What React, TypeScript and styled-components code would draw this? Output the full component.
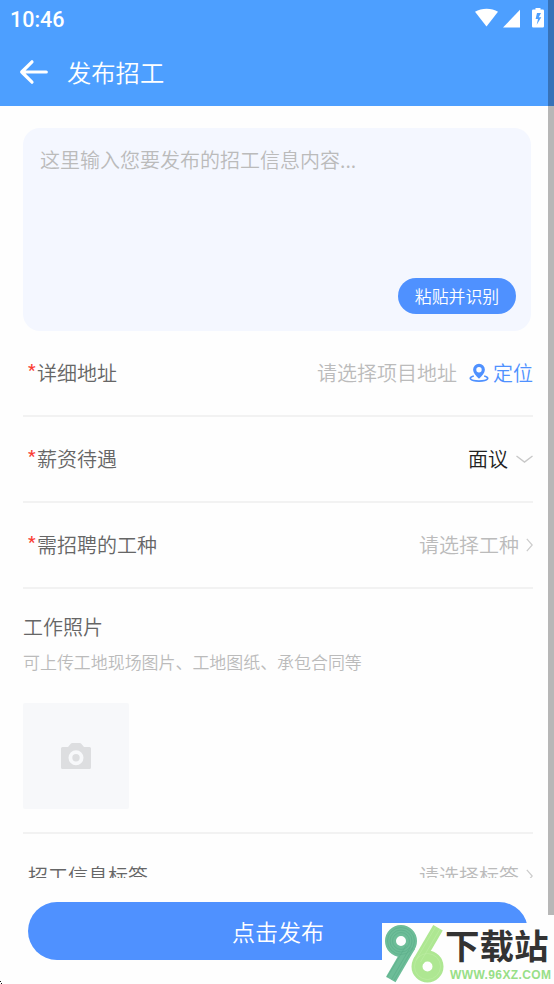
import React from "react";
import styled, { createGlobalStyle } from "styled-components";

const Global = createGlobalStyle`
  *, *::before, *::after { box-sizing: border-box; }
  html, body { margin: 0; padding: 0; overflow: hidden; background: #fff; }
  svg { display: block; flex: none; }
`;

const Screen = styled.div`
  position: relative;
  display: flex;
  flex-direction: column;
  width: 554px;
  height: 984px;
  overflow: hidden;
  background: #fefefe;
  font-family: "Noto Sans CJK SC", sans-serif;
  font-weight: 350;
  color: #666;
`;

const TopArea = styled.header`
  flex: none;
  height: 106px;
  background: #4d9fff;
  color: #fff;
`;

const StatusBar = styled.div`
  display: flex;
  align-items: center;
  justify-content: space-between;
  height: 38px;
  padding: 0 9px 0 10px;
`;

const Clock = styled.span`
  font: 500 21.5px/38px Roboto, sans-serif;
  padding-top: 2px;
`;

const StatusIcons = styled.div`
  display: flex;
  align-items: center;
  padding-bottom: 2px;
`;

const NavBar = styled.div`
  display: flex;
  align-items: center;
  gap: 18px;
  height: 68px;
  padding: 0 0 1px 19px;
`;

const Title = styled.h1`
  margin: 0;
  font-size: 24.3px;
  line-height: 36px;
  font-weight: 350;
`;

const ScrollArea = styled.main`
  flex: none;
  height: 772px;
  padding: 22px 21px 0 23px;
  overflow: hidden;
`;

const MessageBox = styled.section`
  display: flex;
  flex-direction: column;
  justify-content: space-between;
  width: 508px;
  height: 203px;
  padding: 17px 15px 17px 17px;
  border-radius: 17px;
  background: #f4f7ff;
`;

const MessageHint = styled.span`
  font-size: 20px;
  line-height: 29px;
  color: #bbb;
`;

const PasteButton = styled.button`
  align-self: flex-end;
  width: 118px;
  height: 36px;
  padding: 0;
  border: 0;
  border-radius: 18px;
  background: #4f91ff;
  color: #fff;
  font: inherit;
  font-size: 16.9px;
  line-height: 36px;
`;

const Row = styled.div`
  display: flex;
  align-items: center;
  justify-content: space-between;
  height: 86px;
  padding-left: 5px;
  border-bottom: 2px solid #f2f2f2;
  font-size: 20px;
  line-height: 30px;
`;

const Label = styled.span`
  display: flex;
`;

const Required = styled.span`
  width: 9px;
  color: #fa3c32;
  font: 500 17px/24px Roboto, sans-serif;
`;

const Control = styled.span<{ $filled?: boolean }>`
  display: flex;
  align-items: center;
  color: ${(p) => (p.$filled ? "#222" : "#bbb")};
`;

const Locate = styled.span`
  display: flex;
  align-items: center;
  gap: 4px;
  margin-left: 12px;
  color: #4f91ff;
`;

const IconSlot = styled.span<{ $gap: number }>`
  margin-left: ${(p) => p.$gap}px;
`;

const Photos = styled.section`
  height: 245px;
  padding-top: 23px;
  border-bottom: 2px solid #f2f2f2;
`;

const PhotosTitle = styled.h2`
  margin: 0;
  font-size: 20px;
  line-height: 30px;
  font-weight: 350;
`;

const PhotosHint = styled.p`
  margin: 7px 0 29px;
  font-size: 16.95px;
  line-height: 25px;
  color: #bbb;
`;

const Upload = styled.div`
  display: grid;
  place-items: center;
  width: 106px;
  height: 106px;
  border-radius: 2px;
  background: #f7f8fa;
`;

const Footer = styled.footer`
  flex: 1;
  padding: 24px 26px 0 28px;
`;

const Submit = styled.button`
  display: block;
  width: 500px;
  height: 58px;
  padding: 0;
  border: 0;
  border-radius: 29px;
  background: #4f91ff;
  color: #fff;
  font: inherit;
  font-size: 23px;
  line-height: 58px;
`;

const ScrollThumb = styled.div`
  position: absolute;
  top: 0;
  right: 0;
  width: 6px;
  height: 915px;
  background: rgba(0, 0, 0, 0.28);
`;

const CornerMark = styled.div`
  position: absolute;
  left: 0;
  bottom: 0;
`;

const SiteBadge = styled.div`
  position: absolute;
  right: 0;
  bottom: 0;
  display: flex;
  width: 172px;
  height: 61px;
  background: #fefefe;
`;

const SiteText = styled.div`
  display: flex;
  flex-direction: column;
  flex: none;
  width: 108px;
  white-space: nowrap;
`;

const SiteName = styled.div`
  height: 44px;
  color: #333;
  font-size: 34.5px;
  font-weight: 700;
  line-height: 42px;
`;

const SiteUrl = styled.div`
  padding-left: 5px;
  color: #98df87;
  font: 700 12px/18px "Liberation Sans", sans-serif;
  letter-spacing: 0.4px;
`;

const ArrowRightIcon = () => (
  <svg width="7" height="14" viewBox="0 0 7 14" fill="none" stroke="#ccc" strokeWidth="1.2">
    <path d="M.8.8 6.200 7 .8 13.200" />
  </svg>
);

export default function App() {
  return (
    <Screen>
      <Global />
      <TopArea>
        <StatusBar>
          <Clock>10:46</Clock>
          <StatusIcons>
            <svg width="70" height="20" viewBox="0 0 70 20" fill="#fff">
              <path d="M0 3.700C6.700-.2 16.700-.2 23 3.700L11.500 18.500Z" />
              <path d="M45 1.800v17.700H28Z" />
              <path
                fillRule="evenodd"
                d="M60.500 0h5v1.500h2.300q1.200 0 1.200 1.200v15.600q0 1.200-1.200 1.200h-9.600q-1.200 0-1.200-1.200V2.700q0-1.200 1.200-1.200h2.300ZM62 5l-1.400 6H63l-1.300 5.800L66.300 9.300h-2.500L66 5Z"
              />
            </svg>
          </StatusIcons>
        </StatusBar>
        <NavBar>
          <svg width="30" height="26" viewBox="0 0 30 26" fill="none" stroke="#fff" strokeWidth="3.200" strokeLinecap="round" strokeLinejoin="round">
            <path d="M27.300 13H2.700M13 2.800 2.700 13 13 23.200" />
          </svg>
          <Title>发布招工</Title>
        </NavBar>
      </TopArea>
      <ScrollArea>
        <MessageBox>
          <MessageHint>这里输入您要发布的招工信息内容...</MessageHint>
          <PasteButton>粘贴并识别</PasteButton>
        </MessageBox>
        <Row>
          <Label><Required>*</Required>详细地址</Label>
          <Control>
            请选择项目地址
            <Locate>
              <svg width="20" height="20" viewBox="0 0 20 20" fill="none" stroke="#4f91ff">
                <path fill="#4f91ff" stroke="none" fillRule="evenodd" d="M10 .8a5.900 5.900 0 0 1 5.900 5.900c0 3.100-2.700 5.900-5.900 9-3.200-3.100-5.900-5.900-5.900-9A5.900 5.900 0 0 1 10 .8Zm0 3.200a2.700 2.700 0 1 0 0 5.400A2.700 2.700 0 0 0 10 4Z" />
                <path strokeWidth="1.600" d="M4.800 12.900C-1 14.400.2 18.100 10 18.100s11-3.700 5.200-5.200" />
              </svg>
              定位
            </Locate>
          </Control>
        </Row>
        <Row>
          <Label><Required>*</Required>薪资待遇</Label>
          <Control $filled>
            面议
            <IconSlot $gap={8}>
              <svg width="17" height="9" viewBox="0 0 17 9" fill="none" stroke="#c8c8c8" strokeWidth="1.400">
                <path d="M.5 1 8.500 7 16.500 1" />
              </svg>
            </IconSlot>
          </Control>
        </Row>
        <Row>
          <Label><Required>*</Required>需招聘的工种</Label>
          <Control>
            请选择工种
            <IconSlot $gap={7}><ArrowRightIcon /></IconSlot>
          </Control>
        </Row>
        <Photos>
          <PhotosTitle>工作照片</PhotosTitle>
          <PhotosHint>可上传工地现场图片、工地图纸、承包合同等</PhotosHint>
          <Upload>
            <svg width="30" height="26" viewBox="0 0 30 26">
              <path fill="#dddee0" d="M1.500 4H7l2.500-3q.8-1 1.800-1h7.400q1 0 1.800 1L23 4h5.500Q30 4 30 5.500v19q0 1.500-1.500 1.500h-27Q0 26 0 24.500v-19Q0 4 1.500 4Z" />
              <circle cx="15" cy="14.700" r="5.600" fill="#dddee0" stroke="#f7f8fa" strokeWidth="3.800" />
            </svg>
          </Upload>
        </Photos>
        <Row>
          <Label>招工信息标签</Label>
          <Control>
            请选择标签
            <IconSlot $gap={7}><ArrowRightIcon /></IconSlot>
          </Control>
        </Row>
      </ScrollArea>
      <Footer>
        <Submit>点击发布</Submit>
      </Footer>
      <ScrollThumb />
      <CornerMark>
        <svg width="2" height="4" viewBox="0 0 2 4" fill="#111">
          <path d="M0 1h1v1H0zM1 3h1v1H1z" />
        </svg>
      </CornerMark>
      <SiteBadge>
        <svg width="63" height="61" viewBox="0 0 63 61" fill="none">
          <g stroke="#6dbd98" strokeWidth="11">
            <circle cx="19" cy="18" r="10.500" />
            <path d="M28.200 23.200 8.800 56.500" />
          </g>
          <g stroke="#4a9f7c" strokeWidth=".6" opacity=".55">
            <circle cx="19" cy="18" r="8.500" />
            <circle cx="19" cy="18" r="11" />
            <circle cx="19" cy="18" r="13.500" />
            <path d="M24 22.500 5 54.500M28.500 24 9.500 56.500M31 25 12 57.500" />
          </g>
          <g stroke="#aee792" strokeWidth="11">
            <circle cx="45.500" cy="43.500" r="10.500" />
            <path d="M36.400 38.200 56 4.800" />
          </g>
          <g stroke="#c9f3b4" strokeWidth=".6" opacity=".6">
            <circle cx="45.500" cy="43.500" r="13" />
            <path d="M34 37 53.500 4M38.500 39 58 6" />
          </g>
        </svg>
        <SiteText>
          <SiteName>下载站</SiteName>
          <SiteUrl>WWW.96XZ.COM</SiteUrl>
        </SiteText>
      </SiteBadge>
    </Screen>
  );
}
